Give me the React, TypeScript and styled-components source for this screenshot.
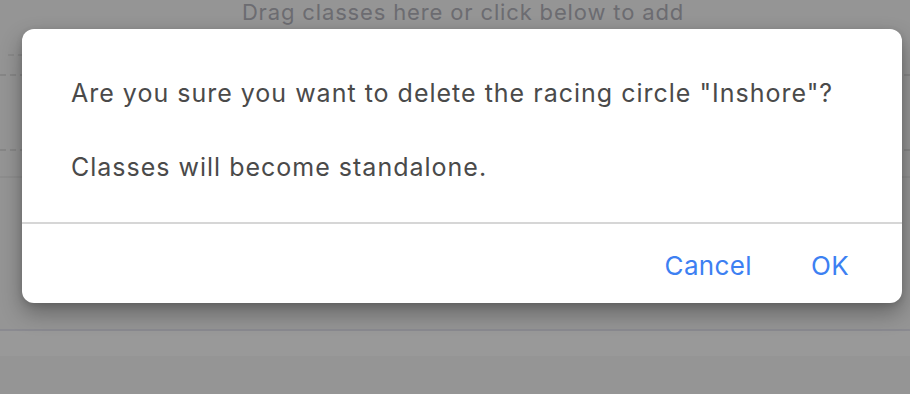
import React from 'react';
import styled, { createGlobalStyle } from 'styled-components';

const GlobalStyle = createGlobalStyle`
    html, body {
        margin: 0;
        padding: 0;
        background: #959595;
    }
    body {
        font-family: Inter, "Noto Sans", sans-serif;
        -webkit-font-smoothing: antialiased;
    }
`;

const Page = styled.div`
    position: relative;
    width: 910px;
    height: 394px;
    overflow: hidden;
    background: #959595;
    display: flex;
    flex-direction: column;
`;

const Hint = styled.div`
    height: 26px;
    padding-left: 16px;
    text-align: center;
    font-size: 22px;
    line-height: 24px;
    color: #6c6c71;
    letter-spacing: 0.85px;
`;

interface RuleProps {
    top: number
    inset?: number
    dashed?: boolean
    color?: string
}
const Rule = styled.div<RuleProps>`
    margin-top: ${p => p.top}px;
    margin-left: ${p => p.inset || 0}px;
    margin-right: ${p => p.inset || 0}px;
    height: 0;
    border-top: 2px ${p => (p.dashed ? 'dashed' : 'solid')} ${p => p.color || '#888889'};
`;

const Band = styled.div`
    height: 25px;
    background: #999999;
`;

const Overlay = styled.div`
    position: absolute;
    inset: 0;
`;

const Dialog = styled.div`
    position: absolute;
    left: 22px;
    top: 29px;
    width: 880px;
    height: 274px;
    background: #ffffff;
    border-radius: 12px;
    box-shadow: 0 10px 22px rgba(0, 0, 0, 0.32), 0 2px 6px rgba(0, 0, 0, 0.12);
    display: flex;
    flex-direction: column;
    overflow: hidden;
`;

const Body = styled.div`
    height: 195px;
    box-sizing: border-box;
    padding: 49px 40px 0 49px;
    border-bottom: 2px solid #d6d6d6;
    display: flex;
    flex-direction: column;
    gap: 44px;
`;

const Message = styled.p`
    margin: 0;
    font-size: 25px;
    line-height: 30px;
    letter-spacing: 1px;
    color: #4a4a4a;
`;

const Footer = styled.div`
    flex: 1;
    display: flex;
    align-items: center;
    justify-content: flex-end;
    padding-right: 53px;
    padding-top: 4px;
    gap: 59px;
`;

const ActionButton = styled.button`
    border: 0;
    background: none;
    padding: 0;
    font-family: inherit;
    font-size: 26px;
    letter-spacing: 0.35px;
    color: #3d80f2;
    cursor: pointer;
`;

function App() {
  return (
    <>
      <GlobalStyle />
      <Page>
        <Hint>Drag classes here or click below to add</Hint>
        <Rule top={28} inset={8} dashed color="#8a8a8a" />
        <Rule top={18} dashed color="#878787" />
        <Rule top={73} dashed color="#878787" />
        <Rule top={25} color="#8e8e8e" />
        <Rule top={151} color="#8a8a90" />
        <Band />
        <Overlay>
          <Dialog role="alertdialog">
            <Body>
              <Message>Are you sure you want to delete the racing circle "Inshore"?</Message>
              <Message>Classes will become standalone.</Message>
            </Body>
            <Footer>
              <ActionButton>Cancel</ActionButton>
              <ActionButton>OK</ActionButton>
            </Footer>
          </Dialog>
        </Overlay>
      </Page>
    </>
  );
}

export default App;
